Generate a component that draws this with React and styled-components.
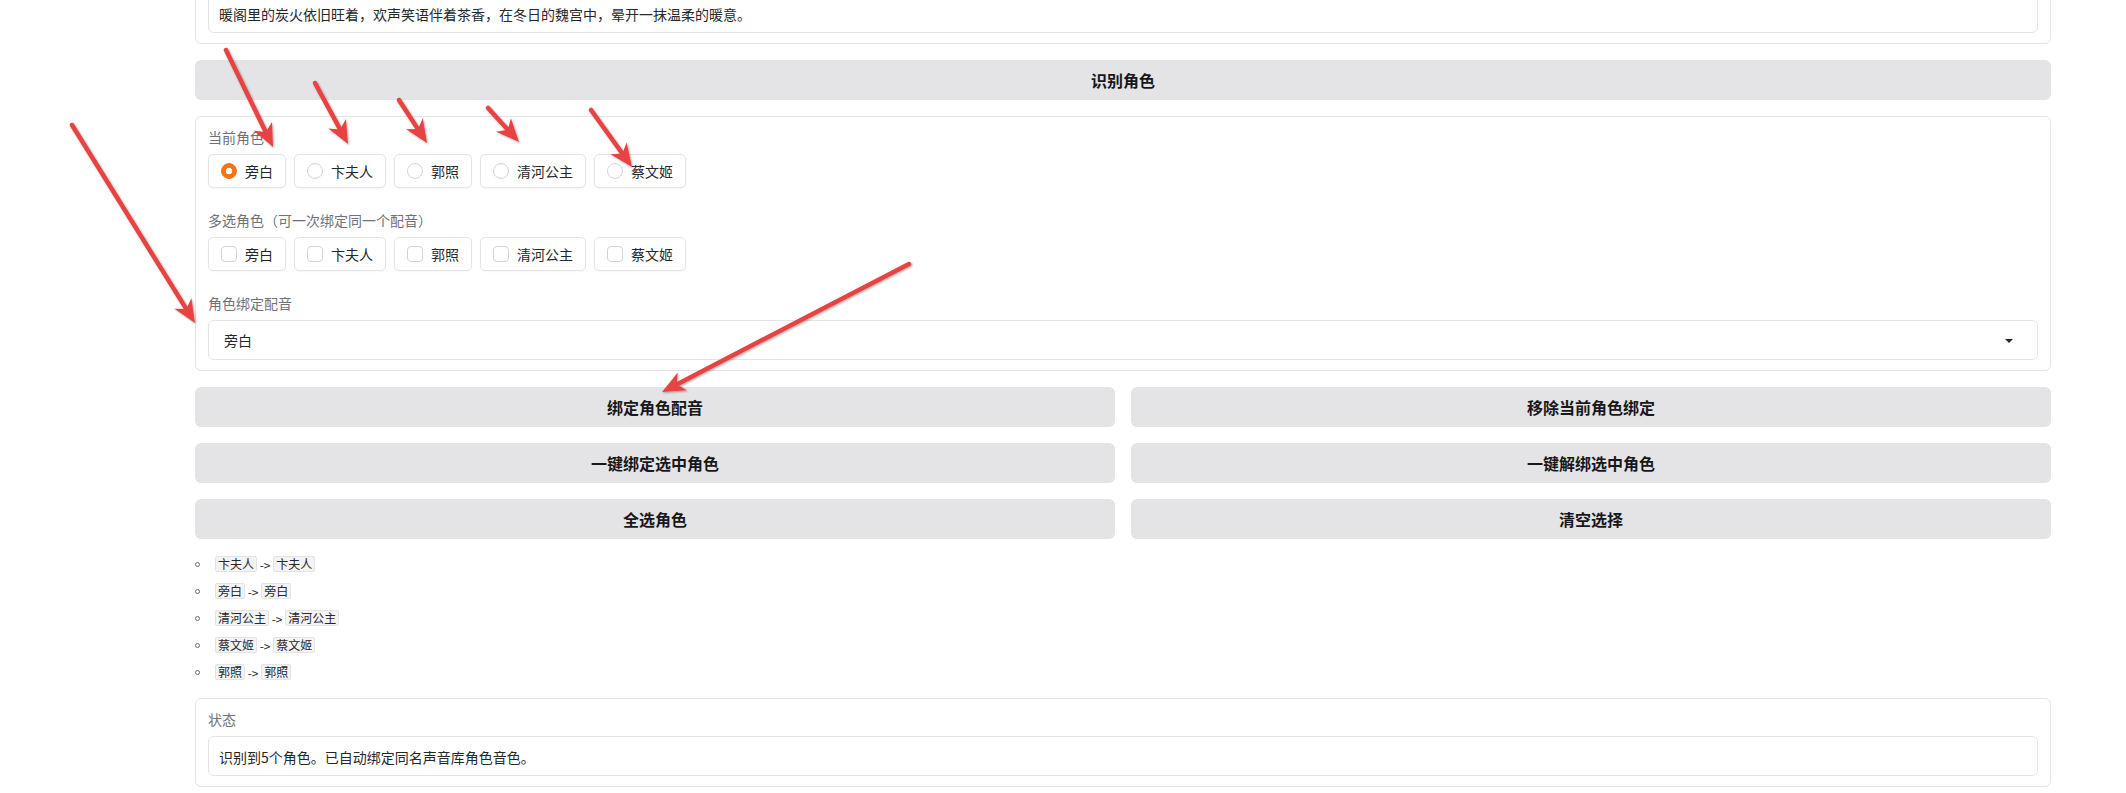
import React from 'react';
import styled, { createGlobalStyle } from 'styled-components';

const roles = ['旁白', '卞夫人', '郭照', '清河公主', '蔡文姬'];

const bindings = [
    ['卞夫人', '卞夫人'],
    ['旁白', '旁白'],
    ['清河公主', '清河公主'],
    ['蔡文姬', '蔡文姬'],
    ['郭照', '郭照'],
];

// red annotation arrows drawn over the screenshot: tail -> tip
const arrows = [
    [226, 50, 273, 147],
    [315, 83, 348, 144],
    [399, 100, 427, 143],
    [488, 108, 519, 142],
    [591, 110, 632, 167],
    [72, 125, 195, 323],
    [909, 264, 662, 392],
];

const App = () => {
    return (
        <>
            <GlobalStyle />
            <Page>
                <Column>
                    <Card>
                        <Label />
                        <TextBox>暖阁里的炭火依旧旺着，欢声笑语伴着茶香，在冬日的魏宫中，晕开一抹温柔的暖意。</TextBox>
                    </Card>

                    <Button>识别角色</Button>

                    <Card>
                        <Fields>
                            <Field>
                                <Label>当前角色</Label>
                                <Chips>
                                    {roles.map((r, i) => (
                                        <Chip key={r}>
                                            <Radio checked={i === 0} />
                                            {r}
                                        </Chip>
                                    ))}
                                </Chips>
                            </Field>
                            <Field>
                                <Label>多选角色（可一次绑定同一个配音）</Label>
                                <Chips>
                                    {roles.map((r) => (
                                        <Chip key={r}>
                                            <Check />
                                            {r}
                                        </Chip>
                                    ))}
                                </Chips>
                            </Field>
                            <Field>
                                <Label>角色绑定配音</Label>
                                <Select>
                                    旁白
                                    <Caret />
                                </Select>
                            </Field>
                        </Fields>
                    </Card>

                    <ButtonGrid>
                        <Button>绑定角色配音</Button>
                        <Button>移除当前角色绑定</Button>
                        <Button>一键绑定选中角色</Button>
                        <Button>一键解绑选中角色</Button>
                        <Button>全选角色</Button>
                        <Button>清空选择</Button>
                    </ButtonGrid>

                    <BindList>
                        {bindings.map(([a, b]) => (
                            <BindItem key={a}>
                                <Bullet />
                                <Code>{a}</Code>&nbsp;-&gt;&nbsp;<Code>{b}</Code>
                            </BindItem>
                        ))}
                    </BindList>

                    <Card>
                        <Label>状态</Label>
                        <TextBox>识别到5个角色。已自动绑定同名声音库角色音色。</TextBox>
                    </Card>
                </Column>

                <Overlay width="2126" height="793" viewBox="0 0 2126 793">
                    <defs>
                        <filter id="arrowShadow" x="-20%" y="-20%" width="140%" height="140%">
                            <feDropShadow dx="1" dy="1" stdDeviation="0.8" floodColor="#000" floodOpacity="0.35" />
                        </filter>
                    </defs>
                    {arrows.map((a, i) => (
                        <Arrow key={i} x1={a[0]} y1={a[1]} x2={a[2]} y2={a[3]} />
                    ))}
                </Overlay>
            </Page>
        </>
    );
};
export default App;

const Arrow = ({ x1, y1, x2, y2 }) => {
    const dx = x2 - x1;
    const dy = y2 - y1;
    const len = Math.hypot(dx, dy);
    const ux = dx / len;
    const uy = dy / len;
    const nx = -uy;
    const ny = ux;
    const L = 23;
    const W = 10;
    const bx = x2 - ux * L;
    const by = y2 - uy * L;
    const mx = x2 - ux * L * 0.72;
    const my = y2 - uy * L * 0.72;
    const pts = [
        [x2, y2],
        [bx + nx * W, by + ny * W],
        [mx, my],
        [bx - nx * W, by - ny * W],
    ]
        .map((p) => p.map((v) => v.toFixed(1)).join(','))
        .join(' ');
    return (
        <g filter="url(#arrowShadow)">
            <ArrowLine x1={x1} y1={y1} x2={mx} y2={my} />
            <ArrowHead points={pts} />
        </g>
    );
};

const GlobalStyle = createGlobalStyle`
    html, body {
        margin: 0;
        padding: 0;
        background: #ffffff;
        overflow: hidden;
    }
    body {
        font-family: "Noto Sans CJK SC", "Noto Sans", "Liberation Sans", sans-serif;
        color: #27272a;
    }
    * {
        box-sizing: border-box;
    }
`;

const Page = styled.div`
    position: relative;
    width: 2126px;
    height: 793px;
    overflow: hidden;
`;

const Column = styled.div`
    margin: -45px 0 0 195px;
    width: 1856px;
    display: flex;
    flex-direction: column;
    gap: 16px;
`;

const Card = styled.div`
    background: #fff;
    border: 1px solid #e4e4e7;
    border-radius: 6px;
    padding: 10px 12px 10px;
`;

const Label = styled.div`
    font-size: 14px;
    line-height: 20px;
    height: 20px;
    color: #71717a;
    margin-bottom: 7px;
`;

const TextBox = styled.div`
    height: 40px;
    border: 1px solid #e4e4e7;
    border-radius: 6px;
    padding: 10px 10px 0;
    font-size: 14px;
    line-height: 20px;
    color: #27272a;
`;

const Fields = styled.div`
    display: flex;
    flex-direction: column;
    gap: 22px;
`;

const Field = styled.div``;

const Chips = styled.div`
    display: flex;
    gap: 8px;
`;

const Chip = styled.label`
    display: flex;
    align-items: center;
    gap: 8px;
    height: 34px;
    padding: 0 12px;
    border: 1px solid #e4e4e7;
    border-radius: 5px;
    background: #fff;
    font-size: 14px;
    color: #27272a;
    box-shadow: 0 1px 2px rgba(0, 0, 0, 0.03);
`;

const Radio = styled.span`
    width: 16px;
    height: 16px;
    border-radius: 50%;
    flex: none;
    background: ${(p) => (p.checked ? 'radial-gradient(circle, #fff 0 3px, #f97316 3.6px)' : '#fff')};
    border: 1px solid ${(p) => (p.checked ? '#f97316' : '#d4d4d8')};
`;

const Check = styled.span`
    width: 16px;
    height: 16px;
    flex: none;
    border-radius: 4px;
    border: 1px solid #d4d4d8;
    background: #fff;
`;

const Select = styled.div`
    position: relative;
    display: flex;
    align-items: center;
    height: 40px;
    padding: 0 15px;
    border: 1px solid #e4e4e7;
    border-radius: 6px;
    font-size: 14px;
    color: #27272a;
`;

const Caret = styled.span`
    position: absolute;
    right: 24px;
    top: 50%;
    margin-top: -1px;
    width: 0;
    height: 0;
    border-left: 4px solid transparent;
    border-right: 4px solid transparent;
    border-top: 4px solid #27272a;
`;

const ButtonGrid = styled.div`
    display: grid;
    grid-template-columns: 1fr 1fr;
    gap: 16px;
`;

const Button = styled.button`
    height: 40px;
    width: 100%;
    border: none;
    border-radius: 6px;
    background: #e4e4e7;
    color: #18181b;
    font-family: inherit;
    font-size: 16px;
    font-weight: 700;
    cursor: pointer;
`;

const BindList = styled.ul`
    list-style: none;
    margin: 0;
    padding: 0 0 1px;
    display: flex;
    flex-direction: column;
    gap: 9px;
`;

const BindItem = styled.li`
    display: flex;
    align-items: center;
    height: 18px;
    font-size: 12px;
    color: #27272a;
`;

const Bullet = styled.span`
    width: 5px;
    height: 5px;
    border: 1px solid #6b6b6b;
    border-radius: 50%;
    margin-right: 15px;
    flex: none;
`;

const Code = styled.code`
    font-family: "Noto Sans CJK SC", "Liberation Mono", monospace;
    font-size: 12px;
    line-height: 14px;
    padding: 0 2px;
    background: #f4f4f5;
    border: 1px solid #e4e4e7;
    border-radius: 2px;
`;

const Overlay = styled.svg`
    position: absolute;
    top: 0;
    left: 0;
    pointer-events: none;
`;

const ArrowLine = styled.line`
    stroke: #e84242;
    stroke-width: 4.5;
    stroke-linecap: round;
`;

const ArrowHead = styled.polygon`
    fill: #e84242;
`;
